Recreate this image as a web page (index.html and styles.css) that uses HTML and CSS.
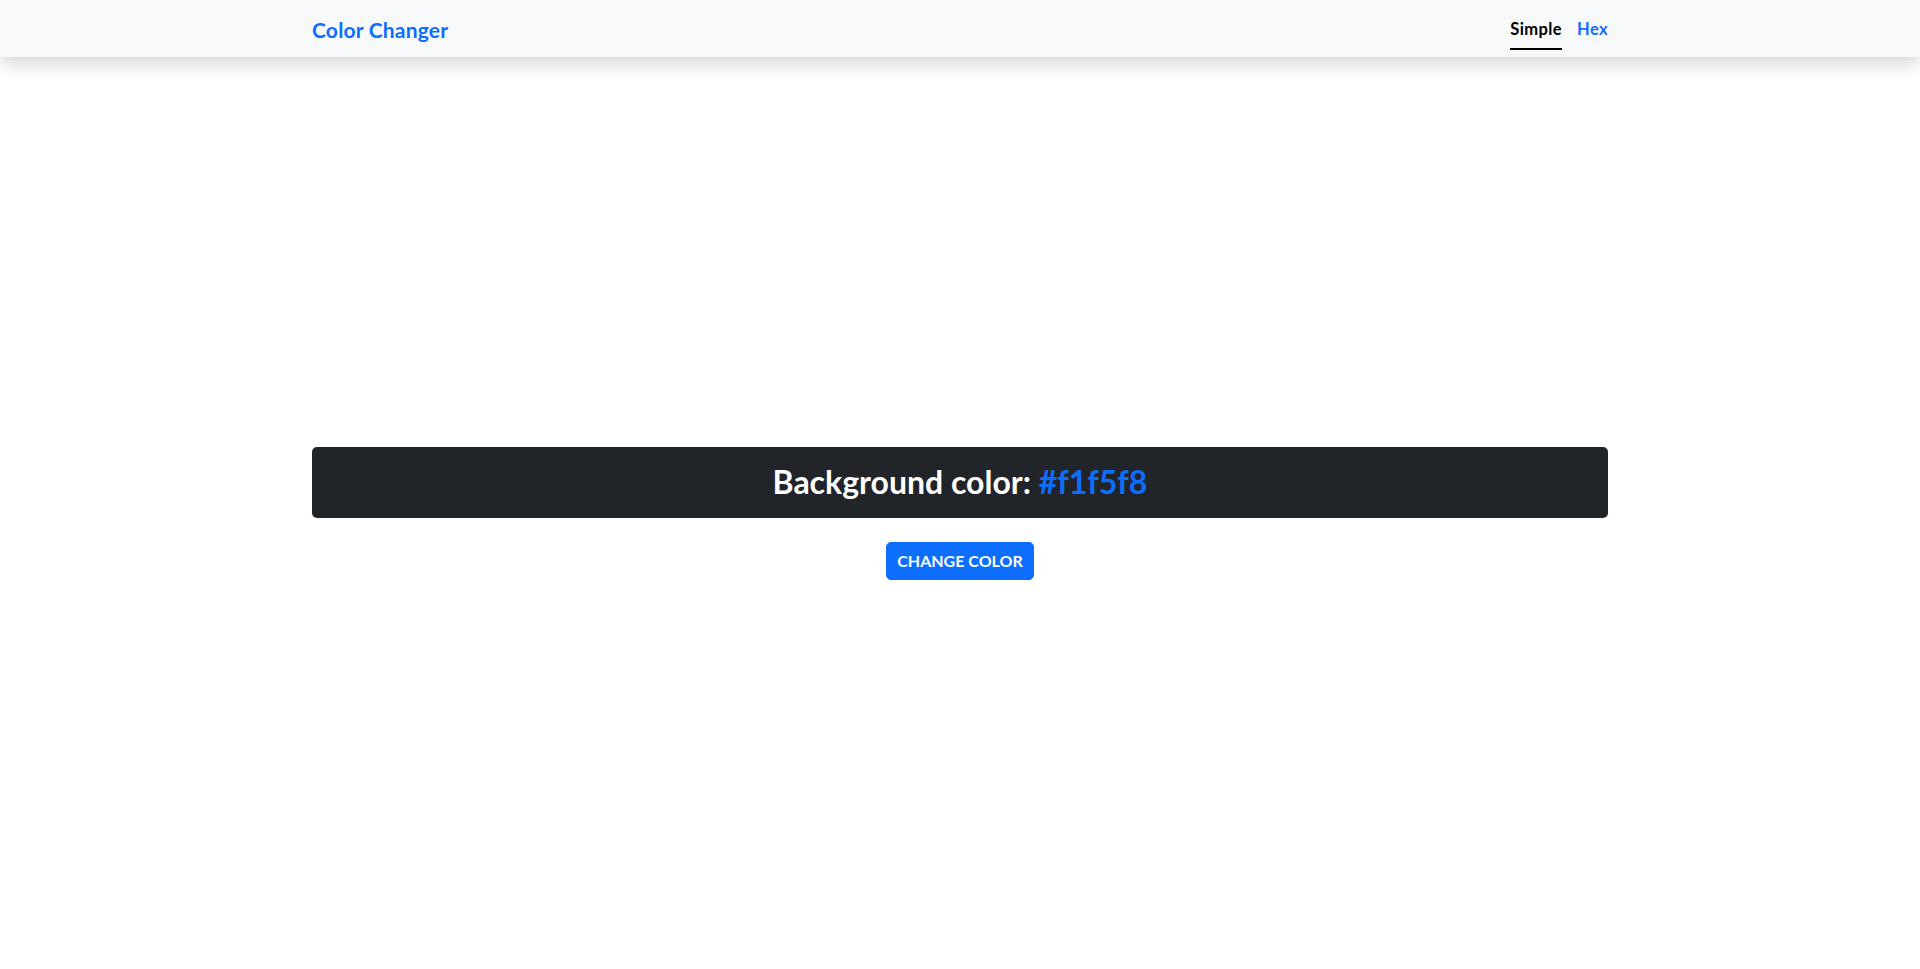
FILE: index.html
```html
<!DOCTYPE html>
<html lang="en">
<head>
<meta charset="utf-8">
<title>Color Changer</title>
<link rel="stylesheet" href="styles.css">
</head>
<body>
<header class="navbar">
  <div class="container nav-inner">
    <a class="brand" href="#">Color Changer</a>
    <nav class="nav-links">
      <a class="nav-link active" href="#">Simple</a>
      <a class="nav-link" href="#">Hex</a>
    </nav>
  </div>
</header>
<main class="main">
  <div class="container content">
    <h2 class="banner">Background color: <span class="hex">#f1f5f8</span></h2>
    <button class="btn" type="button">Change Color</button>
  </div>
</main>
</body>
</html>
```
FILE: styles.css
```css
* { box-sizing: border-box; }
html, body { margin: 0; height: 100%; }
body {
  font-family: Lato, "Open Sans", "Noto Sans", sans-serif;
  background: #ffffff;
  color: #212529;
  display: flex;
  flex-direction: column;
}
.container {
  width: 1296px;
  margin: 0 auto;
}
.navbar {
  background: #f8f9fa;
  height: 57px;
  box-shadow: 0 8px 16px rgba(0,0,0,0.15);
  position: relative;
  z-index: 1;
  flex: none;
}
.nav-inner {
  height: 100%;
  display: flex;
  align-items: center;
  justify-content: space-between;
}
.brand {
  color: #0d6efd;
  font-weight: 700;
  font-size: 21px;
  letter-spacing: 0.2px;
  text-decoration: none;
  line-height: 1;
  padding-top: 1px;
}
.nav-links {
  display: flex;
  gap: 15px;
  align-self: stretch;
  align-items: stretch;
}
.nav-link {
  font-weight: 700;
  font-size: 16.5px;
  letter-spacing: 0.4px;
  color: #0d6efd;
  text-decoration: none;
  display: flex;
  align-items: center;
  padding-top: 9px;
  border-bottom: 2px solid transparent;
  margin-bottom: 7px;
}
.nav-link.active {
  color: #000;
  border-bottom-color: #000;
}
.main {
  flex: 1;
  display: flex;
  align-items: center;
}
.content {
  display: flex;
  flex-direction: column;
  align-items: center;
  gap: 24px;
}
.banner {
  width: 100%;
  margin: 0;
  background: #212529;
  color: #fff;
  border-radius: 5px;
  text-align: center;
  font-size: 32px;
  font-weight: 700;
  line-height: 38px;
  padding: 16px 0 17px;
}
.hex { color: #0d6efd; }
.btn {
  font-family: inherit;
  background: #0d6efd;
  color: #fff;
  border: 1px solid #0d6efd;
  border-radius: 5px;
  font-size: 16px;
  font-weight: 700;
  text-transform: uppercase;
  padding: 6px 0;
  line-height: 24px;
  height: 38px;
  width: 148px;
}
```
